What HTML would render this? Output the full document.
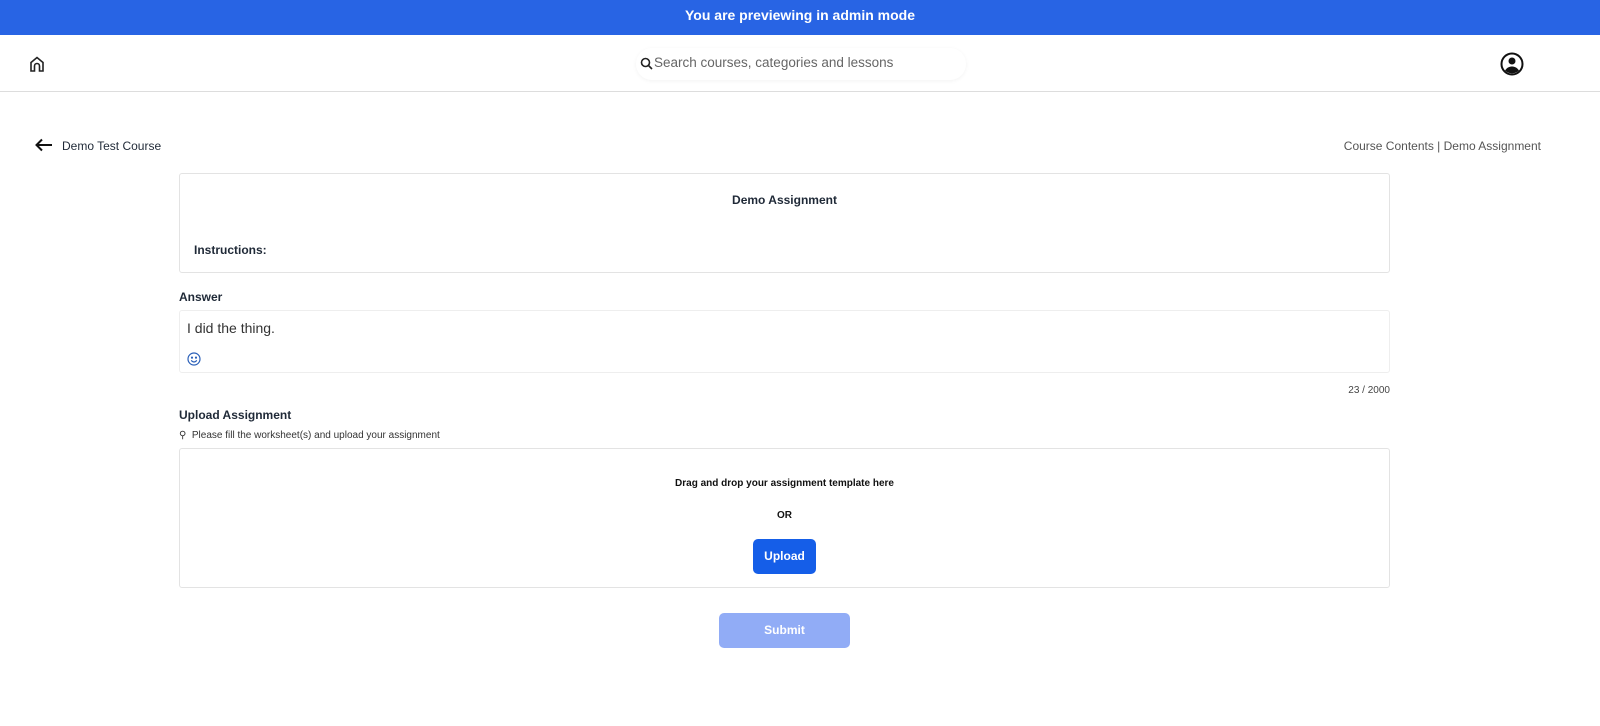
<!DOCTYPE html>
<html><head><meta charset="utf-8"><style>
*{box-sizing:border-box;margin:0;padding:0}
body{width:1600px;height:726px;overflow:hidden;background:#fff;font-family:"Liberation Sans",sans-serif;color:#1f2937;position:relative}
.abs{position:absolute}
.banner{left:0;top:0;width:1600px;height:35px;background:#2864e4;color:#fff;font-weight:bold;font-size:14px;text-align:center;line-height:30px}
.nav{left:0;top:35px;width:1600px;height:57px;border-bottom:1px solid #ddd}
.search{left:636px;top:48px;width:330px;height:32px;border-radius:16px;box-shadow:0 1px 4px rgba(0,0,0,.05);font-size:13.5px;color:#666;line-height:30px;padding-left:18px}
.box{border:1px solid #e3e3e3;border-radius:3px}
.t13{font-size:12px;color:#1f2937}
.b{font-weight:bold}
</style></head><body>
<div class="abs banner">You are previewing in admin mode</div>
<div class="abs nav"></div>
<svg class="abs" style="left:28px;top:55px" width="18" height="18" viewBox="0 0 18 18" fill="none" stroke="#222" stroke-width="1.6"><path d="M3 16V7.5L9 2.5l6 5V16h-3.5v-5a2.5 2.5 0 0 0-5 0v5z"/></svg>
<div class="abs search"><svg style="position:absolute;left:4px;top:9px" width="13" height="13" viewBox="0 0 13 13" fill="none" stroke="#222" stroke-width="1.6"><circle cx="5.5" cy="5.5" r="4"/><path d="M8.5 8.5L12 12"/></svg>Search courses, categories and lessons</div>
<svg class="abs" style="left:1500px;top:52px" width="24" height="24" viewBox="0 0 24 24"><circle cx="12" cy="12" r="10.5" fill="none" stroke="#111" stroke-width="2"/><circle cx="12" cy="9" r="3.5" fill="#111"/><path d="M5 18.5c2-3 4.5-4 7-4s5 1 7 4a10 10 0 0 1-14 0z" fill="#111"/></svg>
<svg class="abs" style="left:35px;top:138px" width="18" height="14" viewBox="0 0 18 14" fill="none" stroke="#111" stroke-width="2"><path d="M17 7H2M7 1.5L1.5 7 7 12.5"/></svg>
<div class="abs t13" style="left:62px;top:139px">Demo Test Course</div>
<div class="abs" style="right:59px;top:139px;font-size:12px;color:#555">Course Contents | Demo Assignment</div>
<div class="abs box" style="left:179px;top:173px;width:1211px;height:100px"></div>
<div class="abs t13 b" style="left:179px;width:1211px;text-align:center;top:193px">Demo Assignment</div>
<div class="abs t13 b" style="left:194px;top:243px">Instructions:</div>
<div class="abs t13 b" style="left:179px;top:290px">Answer</div>
<div class="abs box" style="left:179px;top:310px;width:1211px;height:63px;border-color:#eee"></div>
<div class="abs" style="left:187px;top:320px;font-size:14px;color:#333">I did the thing.</div>
<svg class="abs" style="left:187px;top:352px" width="14" height="14" viewBox="0 0 14 14" fill="none" stroke="#2a5fb8" stroke-width="1.2"><circle cx="7" cy="7" r="6"/><circle cx="5" cy="5.6" r=".5" fill="#2a5fb8"/><circle cx="9" cy="5.6" r=".5" fill="#2a5fb8"/><path d="M4.3 8.3a3 3 0 0 0 5.4 0"/></svg>
<div class="abs" style="right:210px;top:385px;font-size:10px;color:#444">23 / 2000</div>
<div class="abs t13 b" style="left:179px;top:408px">Upload Assignment</div>
<div class="abs" style="left:179px;top:430px;font-size:10px;color:#333">&#9906;&nbsp; Please fill the worksheet(s) and upload your assignment</div>
<div class="abs box" style="left:179px;top:448px;width:1211px;height:140px"></div>
<div class="abs b" style="left:179px;width:1211px;text-align:center;top:478px;font-size:10px;color:#111">Drag and drop your assignment template here</div>
<div class="abs b" style="left:179px;width:1211px;text-align:center;top:510px;font-size:10px;color:#111">OR</div>
<div class="abs b" style="left:753px;top:539px;width:63px;height:35px;background:#155ee8;border-radius:5px;color:#fff;font-size:12px;text-align:center;line-height:35px">Upload</div>
<div class="abs b" style="left:719px;top:613px;width:131px;height:35px;background:#91acf6;border-radius:5px;color:#fff;font-size:12px;text-align:center;line-height:35px">Submit</div>
</body></html>
